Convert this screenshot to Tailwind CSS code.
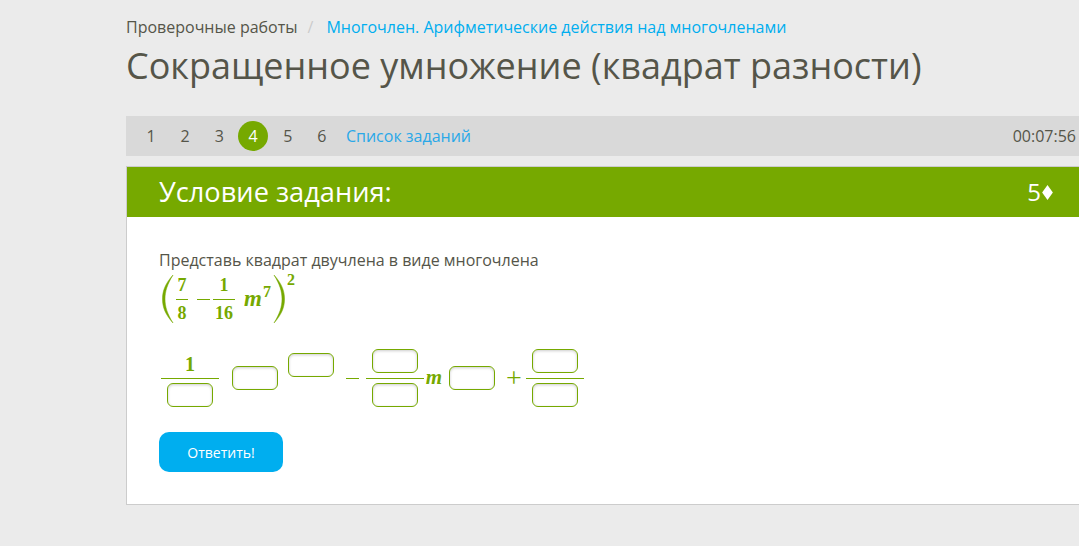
<!DOCTYPE html>
<html lang="ru">
<head>
    <meta charset="UTF-8">
    <title>Сокращенное умножение (квадрат разности)</title>
    <script src="https://cdn.jsdelivr.net/npm/@tailwindcss/browser@4"></script>
</head>
<body class="bg-[#ebebeb] h-[546px] w-[1079px] overflow-hidden font-['Open_Sans',sans-serif] text-[#555549]">
    <div class="ml-[126px] w-[953px] pt-[16px]">
        <!-- breadcrumbs -->
        <div class="flex h-[22px] items-center text-[16px] leading-[22px]">
            <span>Проверочные работы</span>
            <span class="ml-[10px] text-[#ccc]">/</span>
            <span class="ml-[13px] text-[#00aeef]">Многочлен. Арифметические действия над многочленами</span>
        </div>
        <h1 class="mt-[3px] h-[50px] text-[36px] leading-[50px] font-normal">Сокращенное умножение (квадрат разности)</h1>

        <!-- task numbers -->
        <div class="mt-[25px] flex h-[40px] items-center bg-[#d9d9d9] text-[16px]">
            <div class="ml-[10px] flex items-center gap-[4.2px]">
                <span class="flex h-[30px] w-[30px] items-center justify-center">1</span>
                <span class="flex h-[30px] w-[30px] items-center justify-center">2</span>
                <span class="flex h-[30px] w-[30px] items-center justify-center">3</span>
                <span class="ml-[-0.5px] flex h-[30px] w-[30px] items-center justify-center rounded-full bg-[#76a900] text-white">4</span>
                <span class="ml-[0.5px] flex h-[30px] w-[30px] items-center justify-center">5</span>
                <span class="flex h-[30px] w-[30px] items-center justify-center">6</span>
            </div>
            <span class="ml-[9px] text-[#2aa8e8]">Список заданий</span>
            <span class="ml-auto mr-[3px]">00:07:56</span>
        </div>

        <!-- task card -->
        <div class="mt-[10px] h-[339px] border border-r-0 border-[#ccc] bg-white">
            <div class="flex h-[50px] items-center justify-between bg-[#76a900] pl-[32px] pr-[26px] text-white">
                <span class="text-[27.2px]">Условие задания:</span>
                <span class="flex items-center text-[24px]">5<svg class="ml-[1px] h-[15px] w-[11px]" viewBox="0 0 10 14"><path d="M5 0 10 7 5 14 0 7Z" fill="#fff"/></svg></span>
            </div>
            <div class="pl-[32px] pt-[33px]">
                <p class="h-[20px] text-[16px] leading-[20px]">Представь квадрат двучлена в виде многочлена</p>

                <!-- (7/8 - 1/16 m^7)^2 -->
                <div class="flex h-[58px] items-center font-['Liberation_Serif',serif] text-[#76a900]">
                    <svg class="ml-[2px] h-[50px] w-[13px]" viewBox="0 0 13 50" fill="none"><path d="M12 1C4 10 1.5 17 1.5 25S4 40 12 49C6.5 40 4 33 4 25S6.5 10 12 1Z" fill="#76a900" stroke="#76a900" stroke-width=".5"/></svg>
                    <div class="ml-[2px] flex w-[12px] flex-col items-center text-[18px] leading-[27px] font-bold">
                        <span class="w-full border-b border-[#76a900] text-center">7</span>
                        <span>8</span>
                    </div>
                    <span class="ml-[9px] h-px w-[13px] bg-[#76a900]"></span>
                    <div class="ml-[3px] flex w-[22px] flex-col items-center text-[18px] leading-[27px] font-bold">
                        <span class="w-full border-b border-[#76a900] text-center">1</span>
                        <span>16</span>
                    </div>
                    <span class="ml-[9px] text-[23px] font-bold italic">m</span>
                    <span class="mb-[14px] ml-[1px] text-[16px] font-bold">7</span>
                    <svg class="ml-[2px] h-[50px] w-[13px]" viewBox="0 0 13 50" fill="none"><path d="M1 1C9 10 11.500 17 11.500 25S9 40 1 49C6.500 40 9 33 9 25S6.500 10 1 1Z" fill="#76a900" stroke="#76a900" stroke-width=".5"/></svg>
                    <span class="mb-[38px] ml-[1px] text-[16px] font-bold">2</span>
                </div>

                <!-- answer row -->
                <div class="mt-[20px] ml-[2px] flex h-[60px] items-center font-['Liberation_Serif',serif] text-[#76a900]">
                    <div class="flex w-[58px] flex-col items-center">
                        <span class="h-[24px] text-center text-[20px] leading-[30px] font-bold">1</span>
                        <span class="mt-[5px] h-px w-full bg-[#76a900]"></span>
                        <span class="mt-[4px] h-[24px] w-[46px] rounded-[6px] border border-[#76a900] shadow-[inset_0_1px_3px_rgba(0,0,0,0.2)]"></span>
                    </div>
                    <span class="ml-[13px] h-[24px] w-[46px] rounded-[6px] border border-[#76a900] shadow-[inset_0_1px_3px_rgba(0,0,0,0.2)]"></span>
                    <span class="mb-[27px] ml-[10px] h-[24px] w-[46px] rounded-[6px] border border-[#76a900] shadow-[inset_0_1px_3px_rgba(0,0,0,0.2)]"></span>
                    <span class="ml-[12px] h-px w-[13px] bg-[#76a900]"></span>
                    <div class="ml-[7px] flex w-[58px] flex-col items-center">
                        <span class="h-[24px] w-[46px] rounded-[6px] border border-[#76a900] shadow-[inset_0_1px_3px_rgba(0,0,0,0.2)]"></span>
                        <span class="mt-[5px] h-px w-full bg-[#76a900]"></span>
                        <span class="mt-[4px] h-[24px] w-[46px] rounded-[6px] border border-[#76a900] shadow-[inset_0_1px_3px_rgba(0,0,0,0.2)]"></span>
                    </div>
                    <span class="w-[20px] text-center text-[21px] font-bold italic">m</span>
                    <span class="ml-[5px] h-[24px] w-[46px] rounded-[6px] border border-[#76a900] shadow-[inset_0_1px_3px_rgba(0,0,0,0.2)]"></span>
                    <span class="ml-[11px] w-[14px] text-center text-[28px] leading-none">+</span>
                    <div class="ml-[6px] flex w-[58px] flex-col items-center">
                        <span class="h-[24px] w-[46px] rounded-[6px] border border-[#76a900] shadow-[inset_0_1px_3px_rgba(0,0,0,0.2)]"></span>
                        <span class="mt-[5px] h-px w-full bg-[#76a900]"></span>
                        <span class="mt-[4px] h-[24px] w-[46px] rounded-[6px] border border-[#76a900] shadow-[inset_0_1px_3px_rgba(0,0,0,0.2)]"></span>
                    </div>
                </div>

                <button class="mt-[24px] h-[40px] w-[124px] rounded-[10px] bg-[#00aeef] text-[14px] text-white">Ответить!</button>
            </div>
        </div>
    </div>
</body>
</html>
